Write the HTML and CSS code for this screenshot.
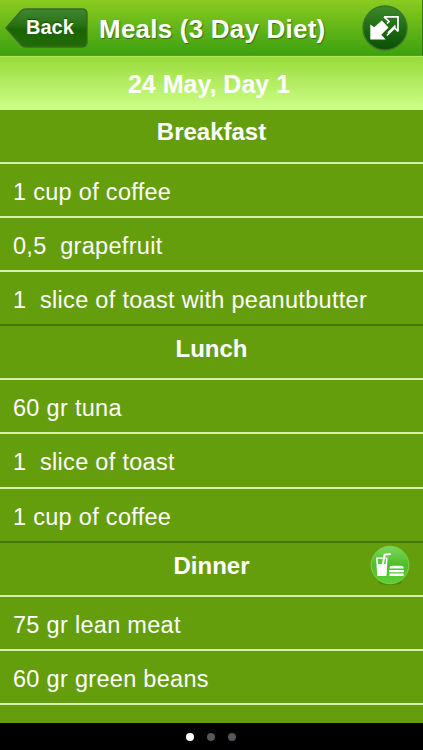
FILE: index.html
```html
<!DOCTYPE html>
<html lang="en">
<head>
    <meta charset="utf-8">
    <meta name="viewport" content="width=device-width, initial-scale=1">
    <title>Meals (3 Day Diet)</title>
    <link rel="stylesheet" href="styles.css">
</head>
<body>
    <div class="app">
        <header class="navbar">
            <button type="button" class="back-btn">
                <svg class="back-shape" viewBox="0 0 84 40" preserveAspectRatio="none" aria-hidden="true">
                    <defs>
                        <linearGradient id="backFill" x1="0" y1="0" x2="0" y2="1">
                            <stop offset="0" stop-color="#408832"/>
                            <stop offset="0.45" stop-color="#267010"/>
                            <stop offset="0.55" stop-color="#1a6304"/>
                            <stop offset="1" stop-color="#226c0a"/>
                        </linearGradient>
                    </defs>
                    <path d="M1 20 L16 3 Q18 1 21 1 H77 Q82 1 82 6 V34 Q82 39 77 39 H21 Q18 39 16 37 Z" fill="url(#backFill)" stroke="#3b6921" stroke-width="1.4"/>
                </svg>
                <span class="back-label">Back</span>
            </button>
            <h1 class="title">Meals (3 Day Diet)</h1>
            <button type="button" class="share-btn" aria-label="Share">
                <svg viewBox="0 0 48 48">
                    <defs>
                        <linearGradient id="shareFill" x1="0" y1="0" x2="0" y2="1">
                            <stop offset="0" stop-color="#3d892d"/>
                            <stop offset="0.5" stop-color="#1d6b12"/>
                            <stop offset="1" stop-color="#0c4e04"/>
                        </linearGradient>
                    </defs>
                    <circle cx="23" cy="23" r="22" fill="url(#shareFill)" stroke="#3d742c" stroke-width="1.4"/>
                    <path d="M8.3 19.5 L12.2 22.3 L19.8 15.5 L26.5 22.5 L19.3 29.8 L23.7 34.4 H8.3 Z" fill="#fff"/>
                    <path d="M36 26.5 L32.7 22.8 L24.8 30.5 M26 27.8 L33.5 20.5 M22 11.8 L27 16.5 L25 18.5 M22 11.8 H36 V26.5" fill="none" stroke="#fff" stroke-width="1.7"/>
                </svg>
            </button>
        </header>

        <div class="date-bar">24 May, Day 1</div>

        <main class="meals">
            <section class="meal">
                <div class="meal-header breakfast"><h2>Breakfast</h2></div>
                <ul>
                    <li>1 cup of coffee</li>
                    <li>0,5  grapefruit</li>
                    <li>1  slice of toast with peanutbutter</li>
                </ul>
            </section>
            <section class="meal">
                <div class="meal-header"><h2>Lunch</h2></div>
                <ul>
                    <li>60 gr tuna</li>
                    <li>1  slice of toast</li>
                    <li>1 cup of coffee</li>
                </ul>
            </section>
            <section class="meal">
                <div class="meal-header">
                    <h2>Dinner</h2>
                    <button type="button" class="food-btn" aria-label="Fast food">
                        <svg viewBox="0 0 40 42">
                            <defs>
                                <linearGradient id="foodFill" x1="0" y1="0" x2="0" y2="1">
                                    <stop offset="0" stop-color="#79d85a"/>
                                    <stop offset="0.5" stop-color="#4fbd2c"/>
                                    <stop offset="1" stop-color="#5dd036"/>
                                </linearGradient>
                            </defs>
                            <ellipse cx="20" cy="37.3" rx="12" ry="2.8" fill="#4f8a0b"/>
                            <circle cx="20" cy="20" r="18.8" fill="url(#foodFill)" stroke="#7fd050"/>
                            <path d="M6 12.5 H17.6 L16.5 31 H7.3 Z" fill="#fff"/>
                            <path d="M7.6 13.7 H16.1 L15.7 19 H8.1 Z" fill="#5dc53c"/>
                            <path d="M12.8 20 L14.6 9.7 L20.8 9" fill="none" stroke="#fff" stroke-width="2"/>
                            <path d="M19.5 22.5 Q19.8 20.7 22 20.7 H31.3 Q33.3 20.7 33.6 22.5 V23.6 H19.5 Z M19 24.9 H34 V27.2 H19 Z M19.5 28.5 H33.6 V31 H19.5 Z" fill="#fff"/>
                        </svg>
                    </button>
                </div>
                <ul>
                    <li>75 gr lean meat</li>
                    <li>60 gr green beans</li>
                </ul>
            </section>
        </main>

        <footer class="pager">
            <span class="dot active"></span>
            <span class="dot"></span>
            <span class="dot"></span>
        </footer>
    </div>
</body>
</html>
```

FILE: styles.css
```css
* {
    box-sizing: border-box;
}
body {
    margin: 0;
    font-family: "Liberation Sans", Arial, sans-serif;
    color: #fff;
    background-color: #000;
}
.app {
    display: flex;
    flex-direction: column;
    width: 423px;
    height: 750px;
    overflow: hidden;
}
h1, h2, ul {
    margin: 0;
    padding: 0;
}
button {
    padding: 0;
    border: none;
    background: none;
    color: inherit;
    font-family: inherit;
}
svg {
    display: block;
    width: 100%;
    height: 100%;
}
.navbar {
    display: flex;
    flex: none;
    align-items: flex-start;
    height: 56px;
    padding: 5px 12px 0 5px;
    background: linear-gradient(#8acb20, #3da10f);
    border-right: 1px solid #397512;
    border-bottom: 1px solid #4aa71c;
}
.back-btn {
    display: grid;
    width: 84px;
    height: 44px;
}
.back-shape,
.back-label {
    grid-area: 1 / 1;
}
.back-shape {
    height: 40px;
    margin-top: 3px;
}
.back-label {
    padding: 10px 0 0 21px;
    font-size: 20px;
    font-weight: bold;
    line-height: 24px;
    text-align: left;
    text-shadow: 0 -1px 1px #164b05;
}
.title {
    flex: 1;
    padding-left: 10px;
    font-size: 26px;
    letter-spacing: 0.22px;
    line-height: 48px;
    white-space: nowrap;
    text-shadow: 1px 1px 1px #366f14;
}
.share-btn {
    flex: none;
    width: 48px;
    height: 48px;
}
.date-bar {
    flex: none;
    height: 54px;
    padding-right: 5px;
    background: linear-gradient(#98db3a, #ceff8a);
    border-top: 1px solid #b1e65b;
    font-size: 25px;
    font-weight: bold;
    line-height: 55px;
    text-align: center;
}
.meals {
    flex: 1;
    background-color: #659e0d;
    overflow: hidden;
}
.meal ul {
    list-style: none;
}
.meal-header {
    display: flex;
    position: relative;
    justify-content: center;
    height: 54.1px;
    padding-top: 9px;
    border-bottom: 2px solid #d6efac;
}
.meal-header.breakfast {
    height: 54px;
    padding-top: 8px;
}
.meal h2 {
    font-size: 24px;
    line-height: 28px;
}
.food-btn {
    position: absolute;
    top: 2px;
    right: 13px;
    width: 40px;
    height: 42px;
}
.meal li {
    height: 54.1px;
    padding-left: 13px;
    border-bottom: 2px solid #d6efac;
    font-size: 23.5px;
    letter-spacing: 0.3px;
    line-height: 56px;
    white-space: pre;
}
.meal:not(:last-child) li:last-child {
    border-bottom-color: #447808;
}
.pager {
    display: flex;
    flex: none;
    align-items: center;
    justify-content: center;
    gap: 13px;
    height: 27px;
    padding-right: 1px;
    background-color: #000;
}
.dot {
    width: 8px;
    height: 8px;
    border-radius: 50%;
    background-color: #55555a;
}
.dot.active {
    background-color: #fff;
}
```
